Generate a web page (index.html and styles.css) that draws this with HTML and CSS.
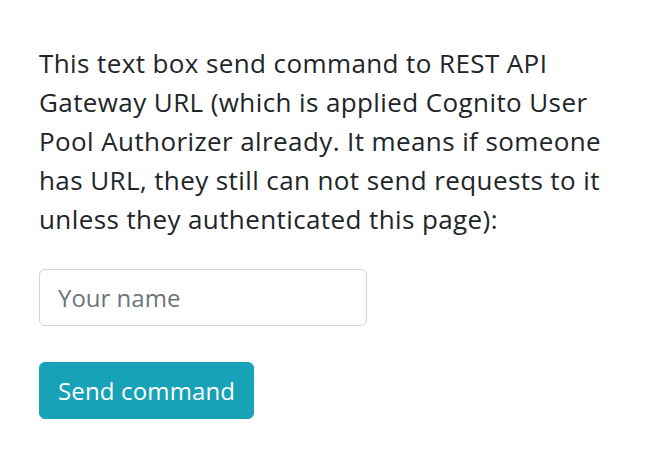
FILE: index.html
```html
<!DOCTYPE html>
<html>
<head>
<meta charset="utf-8">
<link rel="stylesheet" href="styles.css">
</head>
<body>
<main class="page">
  <p class="intro">This text box send command to REST API Gateway URL (which is applied Cognito User Pool Authorizer already. It means if someone has URL, they still can not send requests to it unless they authenticated this page):</p>
  <form class="cmd-form" onsubmit="return false">
    <input class="field" type="text" placeholder="Your name">
    <button class="btn" type="submit">Send command</button>
  </form>
</main>
</body>
</html>
```

FILE: styles.css
```css
* { box-sizing: border-box; }
html, body {
  margin: 0;
  padding: 0;
  background: #fff;
}
body {
  font-family: "Open Sans", "Liberation Sans", sans-serif;
  font-size: 24px;
  line-height: 1.5;
  color: #212529;
}
.page {
  padding: 44px 39px 0 39px;
  width: 658px;
}
.intro {
  margin: 0 0 30px 0;
  font-size: 26px;
  line-height: 39px;
  letter-spacing: 0.4px;
}
.cmd-form {
  display: flex;
  flex-direction: column;
  align-items: flex-start;
  gap: 36px;
}
.field {
  width: 328px;
  height: 57px;
  padding: 9px 18px;
  font-family: inherit;
  font-size: 24px;
  line-height: 1.5;
  color: #495057;
  background: #fff;
  border: 1.5px solid #ced4da;
  border-radius: 6px;
  outline: none;
}
.field::placeholder {
  color: #6c757d;
  opacity: 1;
}
.btn {
  height: 57px;
  padding: 9px 18px;
  font-family: inherit;
  font-size: 24px;
  line-height: 1.5;
  letter-spacing: 0.15px;
  color: #fff;
  background: #17a2b8;
  border: 1.5px solid #17a2b8;
  border-radius: 6px;
  cursor: pointer;
}
```
